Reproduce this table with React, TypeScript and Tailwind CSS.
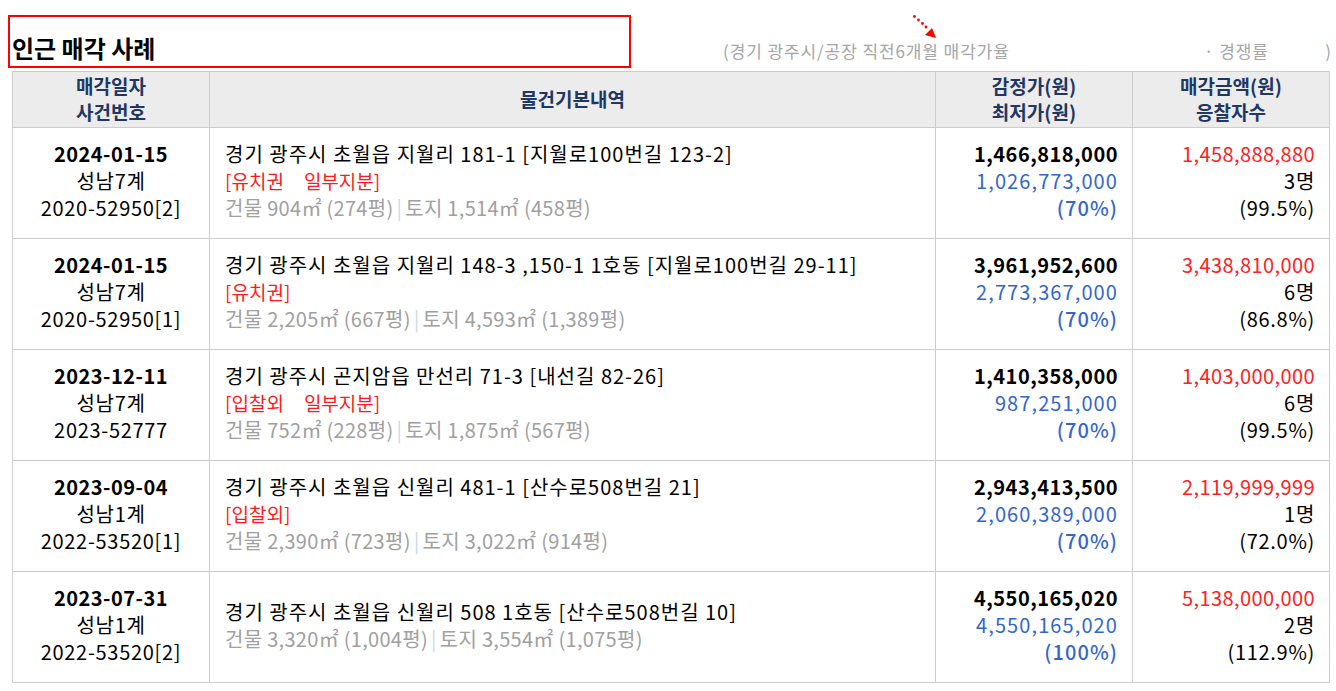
import React from "react"

type Row = {
    date: string
    court: string
    caseNo: string
    addr: string
    tags?: string[]
    bldg: string
    land: string
    appraisal: string
    minimum: string
    minRate: string
    sold: string
    bidders: string
    soldRate: string
}

const rows: Row[] = [
    {
        date: "2024-01-15", court: "성남7계", caseNo: "2020-52950[2]",
        addr: "경기 광주시 초월읍 지월리 181-1 [지월로100번길 123-2]",
        tags: ["유치권", "일부지분"],
        bldg: "건물 904㎡ (274평)", land: "토지 1,514㎡ (458평)",
        appraisal: "1,466,818,000", minimum: "1,026,773,000", minRate: "(70%)",
        sold: "1,458,888,880", bidders: "3명", soldRate: "(99.5%)",
    },
    {
        date: "2024-01-15", court: "성남7계", caseNo: "2020-52950[1]",
        addr: "경기 광주시 초월읍 지월리 148-3 ,150-1 1호동 [지월로100번길 29-11]",
        tags: ["유치권"],
        bldg: "건물 2,205㎡ (667평)", land: "토지 4,593㎡ (1,389평)",
        appraisal: "3,961,952,600", minimum: "2,773,367,000", minRate: "(70%)",
        sold: "3,438,810,000", bidders: "6명", soldRate: "(86.8%)",
    },
    {
        date: "2023-12-11", court: "성남7계", caseNo: "2023-52777",
        addr: "경기 광주시 곤지암읍 만선리 71-3 [내선길 82-26]",
        tags: ["입찰외", "일부지분"],
        bldg: "건물 752㎡ (228평)", land: "토지 1,875㎡ (567평)",
        appraisal: "1,410,358,000", minimum: "987,251,000", minRate: "(70%)",
        sold: "1,403,000,000", bidders: "6명", soldRate: "(99.5%)",
    },
    {
        date: "2023-09-04", court: "성남1계", caseNo: "2022-53520[1]",
        addr: "경기 광주시 초월읍 신월리 481-1 [산수로508번길 21]",
        tags: ["입찰외"],
        bldg: "건물 2,390㎡ (723평)", land: "토지 3,022㎡ (914평)",
        appraisal: "2,943,413,500", minimum: "2,060,389,000", minRate: "(70%)",
        sold: "2,119,999,999", bidders: "1명", soldRate: "(72.0%)",
    },
    {
        date: "2023-07-31", court: "성남1계", caseNo: "2022-53520[2]",
        addr: "경기 광주시 초월읍 신월리 508 1호동 [산수로508번길 10]",
        bldg: "건물 3,320㎡ (1,004평)", land: "토지 3,554㎡ (1,075평)",
        appraisal: "4,550,165,020", minimum: "4,550,165,020", minRate: "(100%)",
        sold: "5,138,000,000", bidders: "2명", soldRate: "(112.9%)",
    },
]

const font = { fontFamily: '"Noto Sans CJK KR", "Noto Sans", sans-serif' }

export default function App() {
    return (
        <div className="bg-white w-[1336px] h-[691px] pl-[12px] text-black" style={font}>
            <div className="relative flex items-end h-[71px]">
                <div className="shrink-0 -ml-[4px] mb-[3px] w-[623px] h-[53px] border-2 border-[#ff0000] flex items-end pl-[2px] pb-[6px]">
                    <h2 className="text-[24px] font-bold leading-none">인근 매각 사례</h2>
                </div>
                <div className="flex items-center text-[17px] tracking-[0.9px] text-[#a6a6a6] mb-[8px] grow">
                    <div className="shrink-0 w-[573px] pl-[92px]">(경기 광주시/공장 직전6개월 매각가율</div>
                    <span>· 경쟁률</span>
                    <span className="ml-auto mr-[4px]">)</span>
                </div>
                <svg className="absolute left-[900px] top-[14px]" width="30" height="28" viewBox="0 0 30 28">
                    <circle cx="2.5" cy="2.5" r="1.4" fill="#ff0000" />
                    <circle cx="6.5" cy="6" r="1.4" fill="#ff0000" />
                    <circle cx="10.5" cy="9.5" r="1.4" fill="#ff0000" />
                    <circle cx="14" cy="13" r="1.4" fill="#ff0000" />
                    <polygon points="24,24 13,21 20,14" fill="#ff0000" />
                </svg>
            </div>
            <table className="w-[1317px] border-collapse table-fixed">
                <colgroup>
                    <col className="w-[197px]" />
                    <col className="w-[726px]" />
                    <col className="w-[197px]" />
                    <col className="w-[197px]" />
                </colgroup>
                <thead>
                    <tr className="bg-[#ececec] h-[56px] text-[#1f3763] font-bold text-[19px] leading-[26px]">
                        <th className="border border-[#cccccc] pb-[2px]">매각일자<br />사건번호</th>
                        <th className="border border-[#cccccc] pb-[2px]">물건기본내역</th>
                        <th className="border border-[#cccccc] pb-[2px]">감정가(원)<br />최저가(원)</th>
                        <th className="border border-[#cccccc] pb-[2px]">매각금액(원)<br />응찰자수</th>
                    </tr>
                </thead>
                <tbody className="text-[20px] leading-[27px] tracking-[0.7px]">
                    {rows.map((r, i) => (
                        <tr key={i} className="h-[111px]">
                            <td className="border border-[#cccccc] text-center align-middle pb-[5px]">
                                <div className="font-bold tracking-[0.5px]">{r.date}</div>
                                <div>{r.court}</div>
                                <div>{r.caseNo}</div>
                            </td>
                            <td className="border border-[#cccccc] pl-[15px] align-middle pb-[5px]">
                                <div className="whitespace-nowrap tracking-[1px]">{r.addr}</div>
                                {r.tags && (
                                    <div className="text-[#ff1a1a] text-[19px] tracking-normal">
                                        [{r.tags.map((t, j) => (
                                            <span key={j} className={j > 0 ? "ml-[20px]" : ""}>{t}</span>
                                        ))}]
                                    </div>
                                )}
                                <div className="text-[#a0a0a0] tracking-[0.3px]">
                                    {r.bldg}
                                    <span className="text-[#c9d9ea] mx-[3px]">|</span>
                                    {r.land}
                                </div>
                            </td>
                            <td className="border border-[#cccccc] text-right pr-[14px] align-middle pb-[5px]">
                                <div className="font-bold tracking-[0.5px]">{r.appraisal}</div>
                                <div className="text-[#3366cc] tracking-[1.1px]">{r.minimum}</div>
                                <div className="text-[#3366cc] font-medium tracking-[1.1px]">{r.minRate}</div>
                            </td>
                            <td className="border border-[#cccccc] text-right pr-[14px] align-middle pb-[5px]">
                                <div className="text-[#ff2020] tracking-[0.4px]">{r.sold}</div>
                                <div>{r.bidders}</div>
                                <div>{r.soldRate}</div>
                            </td>
                        </tr>
                    ))}
                </tbody>
            </table>
        </div>
    )
}
